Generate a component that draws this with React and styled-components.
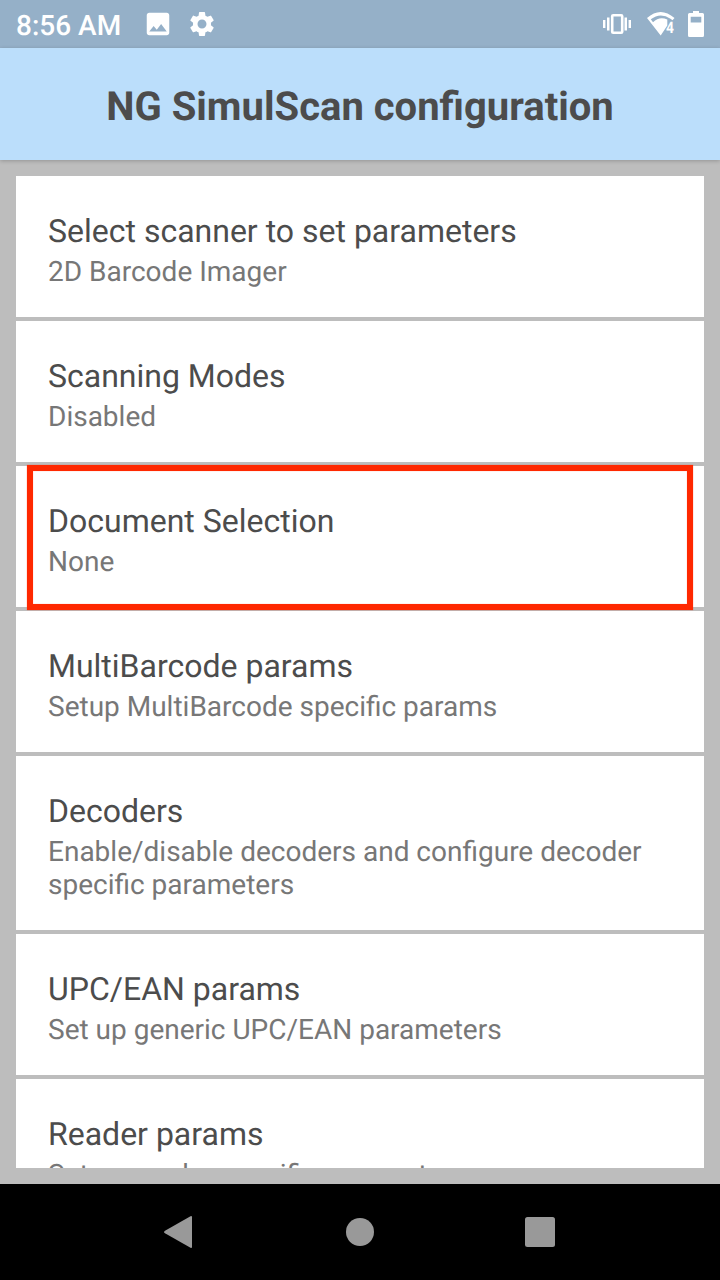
import React from "react";
import styled, { createGlobalStyle } from "styled-components";
import { MdImage, MdSettings } from "react-icons/md";

const GlobalStyle = createGlobalStyle`
  * { box-sizing: border-box; }
  body {
    margin: 0;
    background: #bdbdbd;
    font-family: Roboto, sans-serif;
    text-rendering: geometricPrecision;
  }
`;

const Screen = styled.div`
  width: 720px;
  height: 1280px;
  display: flex;
  flex-direction: column;
  overflow: hidden;
  background: #bdbdbd;
`;

const StatusBar = styled.header`
  height: 48px;
  flex: none;
  display: flex;
  align-items: center;
  justify-content: space-between;
  padding: 0 16px;
  background: #95b0c8;
  color: #fff;
`;

const StatusGroup = styled.div`
  display: flex;
  align-items: center;
  gap: ${(p) => p.$gap}px;
`;

const Clock = styled.span`
  width: 113px;
  padding-top: 3px;
  font-size: 28px;
  line-height: 33px;
  font-weight: 500;
  white-space: nowrap;
`;

const TitleBar = styled.div`
  height: 112px;
  flex: none;
  display: flex;
  align-items: center;
  justify-content: center;
  padding-top: 6px;
  background: #bbdefb;
  box-shadow: 0 1px 4px rgba(0, 0, 0, 0.22);
`;

const PageTitle = styled.h1`
  margin: 0;
  font-size: 40px;
  line-height: 48px;
  font-weight: 700;
  color: #4c4c4c;
`;

const Content = styled.main`
  flex: 1;
  min-height: 0;
  padding: 16px;
`;

const List = styled.div`
  height: 100%;
  display: flex;
  flex-direction: column;
  gap: 4px;
  overflow: hidden;
`;

const Row = styled.section`
  position: relative;
  flex: none;
  padding: 36px 32px 29px;
  background: #fff;
`;

const RowTitle = styled.div`
  font-size: 32px;
  line-height: 38px;
  color: #4c4c4c;
`;

const RowSummary = styled.div`
  padding-top: 5px;
  font-size: 28px;
  line-height: 33px;
  color: #777;
`;

const Highlight = styled.div`
  position: absolute;
  z-index: 1;
  inset: -1px 11px -3px;
  border: 6px solid #ff2800;
  box-shadow: 0 0 1px rgba(255, 40, 0, 0.6), inset 0 0 1px rgba(255, 40, 0, 0.6);
`;

const NavBar = styled.nav`
  height: 96px;
  flex: none;
  display: flex;
  align-items: center;
  justify-content: center;
  gap: 132px;
  background: #000;
  color: #999;
`;

const rows = [
  { title: "Select scanner to set parameters", summary: "2D Barcode Imager" },
  { title: "Scanning Modes", summary: "Disabled" },
  { title: "Document Selection", summary: "None", highlighted: true },
  { title: "MultiBarcode params", summary: "Setup MultiBarcode specific params" },
  { title: "Decoders", summary: "Enable/disable decoders and configure decoder specific parameters" },
  { title: "UPC/EAN params", summary: "Set up generic UPC/EAN parameters" },
  { title: "Reader params", summary: "Set up reader specific parameters" },
];

const VibrateIcon = () => (
  <svg width="28" height="22" viewBox="0 0 28 22" fill="#fff">
    <path d="M0 7h2.400v8H0zM4 4.500h2.500v13H4zM21.500 4.500h2.500v13h-2.500zM25.600 7h2.400v8h-2.400z" />
    <rect x="9.200" y="2.200" width="10" height="17.600" fill="none" stroke="#fff" strokeWidth="2.600" rx="1" />
  </svg>
);

const WifiIcon = () => (
  <svg width="28" height="26" viewBox="0 0 28 26">
    <path
      d="M0 7Q13.500 -5 27.500 7L25.500 9.200L23.500 7.800Q13.500 0.800 3.800 8.200L6 11.200Q12.500 4.800 20.300 8.500V14.500L13.700 24.500Z"
      fill="#fff"
    />
    <g transform="translate(19 21.500) scale(0.860 1)">
      <text fontFamily="Roboto, sans-serif" fontSize="16" fontWeight="700" fill="#fff">4</text>
    </g>
  </svg>
);

const BatteryIcon = () => (
  <svg width="16" height="26" viewBox="0 0 16 26">
    <path fillRule="evenodd" fill="#fff" d="M5 0h6v2h3.500Q16 2 16 3.500v21Q16 26 14.500 26h-13Q0 26 0 24.500v-21Q0 2 1.500 2H5zM2.700 5.700v5.800h10.600V5.700z" />
  </svg>
);

export default function App() {
  return (
    <Screen>
      <GlobalStyle />
      <StatusBar>
        <StatusGroup $gap={14}>
          <Clock>8:56 AM</Clock>
          <MdImage size={30} />
          <MdSettings size={30} />
        </StatusGroup>
        <StatusGroup $gap={16}>
          <VibrateIcon />
          <StatusGroup $gap={13}>
            <WifiIcon />
            <BatteryIcon />
          </StatusGroup>
        </StatusGroup>
      </StatusBar>
      <TitleBar>
        <PageTitle>NG SimulScan configuration</PageTitle>
      </TitleBar>
      <Content>
        <List>
          {rows.map((row) => (
            <Row key={row.title}>
              <RowTitle>{row.title}</RowTitle>
              <RowSummary>{row.summary}</RowSummary>
              {row.highlighted && <Highlight />}
            </Row>
          ))}
        </List>
      </Content>
      <NavBar>
        <svg width="48" height="48" viewBox="0 0 48 48" fill="currentColor">
          <path d="M34.500 8.200Q36 7.500 36 9.200v29.600Q36 40.500 34.500 39.800L9 25.300Q7 24 9 22.700Z" />
        </svg>
        <svg width="48" height="48" viewBox="0 0 48 48" fill="currentColor">
          <circle cx="24" cy="24" r="14" />
        </svg>
        <svg width="48" height="48" viewBox="0 0 48 48" fill="currentColor">
          <rect x="9" y="9" width="30" height="30" rx="2.500" />
        </svg>
      </NavBar>
    </Screen>
  );
}
